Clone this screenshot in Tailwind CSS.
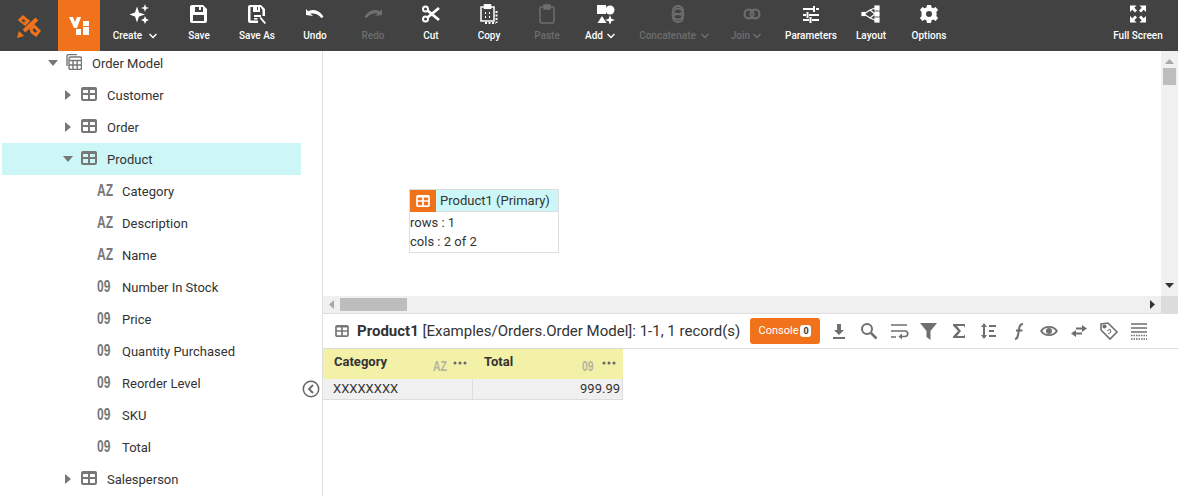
<!DOCTYPE html>
<html>
<head>
<meta charset="utf-8">
<script src="https://cdn.jsdelivr.net/npm/@tailwindcss/browser@4"></script>
</head>
<body class="w-[1178px] h-[496px] overflow-hidden bg-white font-['Roboto',sans-serif] text-[13px] text-[#333]">
<svg class="hidden"><defs>
<symbol id="tbl" viewBox="0 0 16 14"><path fill-rule="evenodd" d="M2 0h12a2 2 0 0 1 2 2v10a2 2 0 0 1-2 2H2a2 2 0 0 1-2-2V2a2 2 0 0 1 2-2zM2 3v3h5V3zm7 0v3h5V3zM2 8v4h5V8zm7 0v4h5V8z"/></symbol>
</defs></svg>

<header class="h-[51px] bg-[#424242] flex text-[10px] font-medium text-white">
  <div class="w-[58px] flex items-center justify-center">
    <svg class="w-6 h-6" viewBox="0 0 24 24" fill="none" stroke="#f0731c"><path stroke-width="3" d="M3 6l3-3 5 4-3 3zM14 15l3-3 5 5-3 4-4-3z"/><path stroke-width="4" d="M20 5L7 17"/><path fill="#f0731c" stroke="none" d="M0 24l2-7 5 5z"/><path stroke-width="1.500" stroke="#424242" d="M5 6l2 2M17 16l2 2"/></svg>
  </div>
  <div class="w-[42px] bg-[#f0731c] flex items-center justify-center">
    <svg class="w-5 h-5" viewBox="0 0 20 20" fill="#fff"><path d="M0 1h4l2 5 2-5h4L8 12H5z"/><rect x="7" y="13" width="5" height="6"/><rect x="14" y="5" width="6" height="5"/><rect x="14" y="11" width="6" height="8"/></svg>
  </div>

  <div class="w-[70px] flex flex-col items-center pt-1">
    <svg class="w-5 h-5 ml-[10px]" viewBox="0 0 20 20" fill="#fff"><path d="M7 2.500l2 6 6 2-6 2-2 6-2-6-6-2 6-2z"/><path d="M15 0l1 3 3 1-3 1-1 3-1-3-3-1 3-1z"/><path d="M15 12l1.200 2.800L19 16l-2.800 1.200L15 20l-1.200-2.800L11 16l2.800-1.200z"/></svg>
    <div class="mt-[5px] leading-[13px] flex items-center gap-[7px]"><span>Create</span><svg class="w-2 h-[6px]" viewBox="0 0 8 6" fill="none" stroke="#fff" stroke-width="1.500"><path d="M.5 1l3.500 3.500L7.500 1"/></svg></div>
  </div>
  <div class="w-[58px] flex flex-col items-center pt-1">
    <svg class="w-5 h-5" viewBox="0 0 20 20" fill="#fff"><path fill-rule="evenodd" d="M3 1h11l4 4v12a2 2 0 0 1-2 2H3a2 2 0 0 1-2-2V3a2 2 0 0 1 2-2zm3 2v5h8V3h-2v3h-2V3zM4 11v6h11v-6z"/></svg>
    <div class="mt-[5px] leading-[13px]">Save</div>
  </div>
  <div class="w-[58px] flex flex-col items-center pt-1">
    <svg class="w-5 h-5" viewBox="0 0 20 20" fill="#fff"><path fill-rule="evenodd" d="M3 1h11l4 4v7h-2.500V6l-2-3h-.5v5H6V3H3.500v13.500H11V19H3a2 2 0 0 1-2-2V3a2 2 0 0 1 2-2zm7 2v3h1V3z"/><path d="M7 11h7v2H7zM7 14h3.500v1.500H7z"/><path d="M14 13l5 6-1.500 1-5-6z"/></svg>
    <div class="mt-[5px] leading-[13px]">Save As</div>
  </div>
  <div class="w-[58px] flex flex-col items-center pt-1">
    <svg class="w-5 h-5" viewBox="0 -2 20 20" fill="#fff"><path d="M1 9l0-6 2.200 2.200C8 2.500 15 4 18.500 11l-2.300 1C14 8 9 7 5.200 7.500L8 10z"/></svg>
    <div class="mt-[5px] leading-[13px]">Undo</div>
  </div>
  <div class="w-[58px] flex flex-col items-center pt-1 text-[#6e6e6e]">
    <svg class="w-5 h-5" viewBox="0 -2 20 20" fill="#6e6e6e"><path d="M19 9l0-6-2.200 2.200C12 2.500 5 4 1.500 11l2.300 1C6 8 11 7 14.800 7.500L12 10z"/></svg>
    <div class="mt-[5px] leading-[13px]">Redo</div>
  </div>
  <div class="w-[58px] flex flex-col items-center pt-1">
    <svg class="w-5 h-5" viewBox="0 0 20 20" fill="none" stroke="#fff"><circle cx="4.500" cy="5" r="2.500" stroke-width="2"/><circle cx="4.500" cy="15" r="2.500" stroke-width="2"/><path stroke-width="2.800" d="M6.500 6.500L18 16M6.500 13.500L18 4"/></svg>
    <div class="mt-[5px] leading-[13px]">Cut</div>
  </div>
  <div class="w-[58px] flex flex-col items-center pt-1">
    <svg class="w-5 h-5" viewBox="0 0 20 20" fill="none" stroke="#fff" stroke-width="1.500"><path d="M5 3H2v14h13V3h-3"/><rect x="5.500" y=".8" width="6" height="3.500" fill="#fff"/><path stroke-width="2" stroke-dasharray="2 1.500" d="M6 9h1M10 9h1M6 13h1M10 13h1M17.500 7v12M6 19h11"/></svg>
    <div class="mt-[5px] leading-[13px]">Copy</div>
  </div>
  <div class="w-[58px] flex flex-col items-center pt-1 text-[#6e6e6e]">
    <svg class="w-5 h-5" viewBox="0 0 20 20" fill="none" stroke="#6e6e6e" stroke-width="1.500"><rect x="3" y="3" width="14" height="16" rx="1.500"/><rect x="7" y="1" width="6" height="4" fill="#6e6e6e"/></svg>
    <div class="mt-[5px] leading-[13px]">Paste</div>
  </div>
  <div class="w-[48px] flex flex-col items-center pt-1">
    <svg class="w-5 h-5 ml-[10px]" viewBox="0 0 20 20" fill="#fff"><rect x="2" y="1" width="9" height="9"/><circle cx="15" cy="6" r="4.500"/><path d="M7 12l4.500 7h-9z"/><path d="M15 11l1.300 3.700L20 16l-3.700 1.300L15 21l-1.300-3.700L10 16l3.700-1.300z"/></svg>
    <div class="mt-[5px] leading-[13px] flex items-center gap-1"><span>Add</span><svg class="w-2 h-[6px]" viewBox="0 0 8 6" fill="none" stroke="#fff" stroke-width="1.500"><path d="M.5 1l3.500 3.500L7.500 1"/></svg></div>
  </div>
  <div class="w-[100px] flex flex-col items-center pt-1 text-[#6e6e6e]">
    <svg class="w-5 h-5 ml-2" viewBox="0 0 20 20" fill="none" stroke="#6e6e6e" stroke-width="1.800"><circle cx="10" cy="10" r="5.500"/><ellipse cx="10" cy="6" rx="5" ry="4"/><ellipse cx="10" cy="14" rx="5" ry="4"/></svg>
    <div class="mt-[5px] leading-[13px] flex items-center gap-[5px]"><span>Concatenate</span><svg class="w-2 h-[6px]" viewBox="0 0 8 6" fill="none" stroke="#6e6e6e" stroke-width="1.500"><path d="M.5 1l3.500 3.500L7.500 1"/></svg></div>
  </div>
  <div class="w-[44px] flex flex-col items-center pt-1 text-[#6e6e6e]">
    <svg class="w-5 h-5 ml-3" viewBox="0 0 20 20" fill="none" stroke="#6e6e6e" stroke-width="2"><circle cx="7" cy="10" r="4.500"/><circle cx="13" cy="10" r="4.500"/></svg>
    <div class="mt-[5px] leading-[13px] flex items-center gap-[3px]"><span>Join</span><svg class="w-2 h-[6px]" viewBox="0 0 8 6" fill="none" stroke="#6e6e6e" stroke-width="1.500"><path d="M.5 1l3.500 3.500L7.500 1"/></svg></div>
  </div>
  <div class="w-[86px] flex flex-col items-center pt-1">
    <svg class="w-5 h-5" viewBox="0 0 20 20" fill="none" stroke="#fff" stroke-width="2"><path d="M2 5h10M15 5h3M2 11h3M8 11h10M2 16h6M11 16h7"/><path stroke-width="2" d="M13 2v6M6.500 8v6M9.500 13v6"/></svg>
    <div class="mt-[5px] leading-[13px]">Parameters</div>
  </div>
  <div class="w-[34px] flex flex-col items-center pt-1">
    <svg class="w-5 h-5" viewBox="0 0 20 20" fill="#fff" stroke="#fff" stroke-width="1.200"><path fill="none" d="M3 10L9 6l5-2M3 10l6 4 5 2M9 6l5 4M9 14l5-4"/><rect x="1" y="8.500" width="3" height="3"/><rect x="14" y="2" width="4" height="4"/><rect x="14" y="8" width="4" height="4"/><rect x="14" y="14" width="4" height="4"/></svg>
    <div class="mt-[5px] leading-[13px]">Layout</div>
  </div>
  <div class="w-[82px] flex flex-col items-center pt-1">
    <svg class="w-5 h-5" viewBox="0 0 20 20" fill="#fff"><path fill-rule="evenodd" d="M8 1h4l.6 2.600 1.700.7 2.300-1.400 2.500 3-1.800 2 .2 1.100.2 1-.2 1-.2 1 1.800 2-2.500 3-2.300-1.400-1.700.7L12 19H8l-.6-2.700-1.700-.7-2.300 1.400-2.500-3 1.800-2-.2-1-.1-2 .3-1.100-1.800-2 2.500-3 2.300 1.400 1.700-.7zM10 7a3 3 0 1 0 0 6 3 3 0 0 0 0-6z"/></svg>
    <div class="mt-[5px] leading-[13px]">Options</div>
  </div>
  <div class="ml-auto mr-[14px] w-[52px] flex flex-col items-center pt-1">
    <svg class="w-5 h-5" viewBox="0 0 20 20" fill="#fff"><path d="M2 1.500h6.500L6.300 3.700l2.700 2.700L7 8.400 4.300 5.700 2 8zM18 1.500h-6.500l2.200 2.200L11 6.400l2 2 2.700-2.700L18 8zM2 18.500h6.500l-2.200-2.200L9 13.600l-2-2-2.700 2.700L2 12zM18 18.500h-6.500l2.200-2.200-2.700-2.700 2-2 2.700 2.700L18 12z"/></svg>
    <div class="mt-[5px] leading-[13px] whitespace-nowrap">Full Screen</div>
  </div>
</header>

<div class="flex h-[445px]">
  <aside class="relative w-[323px] shrink-0 border-r border-[#e0e0e0]">
    <div class="h-full overflow-hidden">
      <ul class="-mt-1 ml-[2px] w-[299px]">
        <li class="h-8 flex items-center pl-[46px]">
          <span class="w-[18px]"><svg class="w-[10px] h-[6px]" viewBox="0 0 10 6" fill="#777"><path d="M0 0h10L5 6z"/></svg></span>
          <span class="w-[26px] -mt-[2px]"><svg class="w-4 h-4" viewBox="0 0 16 16" fill="none" stroke="#777" stroke-width="1.400"><path d="M1 12V2a1.500 1.500 0 0 1 1.500-1.500H11"/><rect x="3" y="3" width="12.500" height="12.500" rx="1.500"/><path d="M3 6.500h12.500M7 6.500v9M11.200 6.500v9M3 11h12.500"/></svg></span>
          <span class="pt-[2px]">Order Model</span>
        </li>
        <li class="h-8 flex items-center pl-[63px]">
          <span class="w-[16px]"><svg class="w-[6px] h-[10px]" viewBox="0 0 6 10" fill="#777"><path d="M0 0l6 5-6 5z"/></svg></span>
          <span class="w-[26px] -mt-[2px]"><svg class="w-4 h-[14px]" fill="#777"><use href="#tbl"/></svg></span>
          <span class="pt-[2px]">Customer</span>
        </li>
        <li class="h-8 flex items-center pl-[63px]">
          <span class="w-[16px]"><svg class="w-[6px] h-[10px]" viewBox="0 0 6 10" fill="#777"><path d="M0 0l6 5-6 5z"/></svg></span>
          <span class="w-[26px] -mt-[2px]"><svg class="w-4 h-[14px]" fill="#777"><use href="#tbl"/></svg></span>
          <span class="pt-[2px]">Order</span>
        </li>
        <li class="h-8 flex items-center pl-[61px] bg-[#ccf7f6]">
          <span class="w-[18px]"><svg class="w-[10px] h-[6px]" viewBox="0 0 10 6" fill="#777"><path d="M0 0h10L5 6z"/></svg></span>
          <span class="w-[26px] -mt-[2px]"><svg class="w-4 h-[14px]" fill="#777"><use href="#tbl"/></svg></span>
          <span class="pt-[2px]">Product</span>
        </li>
        <li class="h-8 flex items-center pl-[95px]"><span class="w-[25px]"><b class="block w-[15px] text-[16px] leading-none -mt-[1px] text-[#777] origin-left scale-x-75 font-['Liberation_Sans',sans-serif]">AZ</b></span><span class="pt-[2px]">Category</span></li>
        <li class="h-8 flex items-center pl-[95px]"><span class="w-[25px]"><b class="block w-[15px] text-[16px] leading-none -mt-[1px] text-[#777] origin-left scale-x-75 font-['Liberation_Sans',sans-serif]">AZ</b></span><span class="pt-[2px]">Description</span></li>
        <li class="h-8 flex items-center pl-[95px]"><span class="w-[25px]"><b class="block w-[15px] text-[16px] leading-none -mt-[1px] text-[#777] origin-left scale-x-75 font-['Liberation_Sans',sans-serif]">AZ</b></span><span class="pt-[2px]">Name</span></li>
        <li class="h-8 flex items-center pl-[95px]"><span class="w-[25px]"><b class="block w-[15px] text-[16px] leading-none -mt-[1px] text-[#777] origin-left scale-x-75 font-['Liberation_Sans',sans-serif]">09</b></span><span class="pt-[2px]">Number In Stock</span></li>
        <li class="h-8 flex items-center pl-[95px]"><span class="w-[25px]"><b class="block w-[15px] text-[16px] leading-none -mt-[1px] text-[#777] origin-left scale-x-75 font-['Liberation_Sans',sans-serif]">09</b></span><span class="pt-[2px]">Price</span></li>
        <li class="h-8 flex items-center pl-[95px]"><span class="w-[25px]"><b class="block w-[15px] text-[16px] leading-none -mt-[1px] text-[#777] origin-left scale-x-75 font-['Liberation_Sans',sans-serif]">09</b></span><span class="pt-[2px]">Quantity Purchased</span></li>
        <li class="h-8 flex items-center pl-[95px]"><span class="w-[25px]"><b class="block w-[15px] text-[16px] leading-none -mt-[1px] text-[#777] origin-left scale-x-75 font-['Liberation_Sans',sans-serif]">09</b></span><span class="pt-[2px]">Reorder Level</span></li>
        <li class="h-8 flex items-center pl-[95px]"><span class="w-[25px]"><b class="block w-[15px] text-[16px] leading-none -mt-[1px] text-[#777] origin-left scale-x-75 font-['Liberation_Sans',sans-serif]">09</b></span><span class="pt-[2px]">SKU</span></li>
        <li class="h-8 flex items-center pl-[95px]"><span class="w-[25px]"><b class="block w-[15px] text-[16px] leading-none -mt-[1px] text-[#777] origin-left scale-x-75 font-['Liberation_Sans',sans-serif]">09</b></span><span class="pt-[2px]">Total</span></li>
        <li class="h-8 flex items-center pl-[63px]">
          <span class="w-[16px]"><svg class="w-[6px] h-[10px]" viewBox="0 0 6 10" fill="#777"><path d="M0 0l6 5-6 5z"/></svg></span>
          <span class="w-[26px] -mt-[2px]"><svg class="w-4 h-[14px]" fill="#777"><use href="#tbl"/></svg></span>
          <span class="pt-[2px]">Salesperson</span>
        </li>
      </ul>
    </div>
    <svg class="absolute left-[302px] top-[329px] w-[18px] h-[18px]" viewBox="0 0 18 18" fill="#fff" stroke="#666"><circle cx="9" cy="9" r="7.700" stroke-width="1.500"/><path fill="none" stroke-width="1.800" d="M11 5L7 9l4 4"/></svg>
  </aside>

  <main class="flex-1 flex flex-col min-w-0">
    <section class="h-[245px] flex relative">
      <div class="flex-1 relative">
        <div class="absolute left-[86px] top-[138px] w-[150px] h-[64px] border border-[#ddd] bg-white">
          <div class="h-[22px] flex items-center bg-[#ccf7f6] border-b border-[#ddd]">
            <span class="w-[26px] h-[22px] bg-[#f0731c] flex items-center justify-center"><svg class="w-[14px] h-3" fill="#fff"><use href="#tbl"/></svg></span>
            <span class="ml-[4px] whitespace-nowrap">Product1 (Primary)</span>
          </div>
          <div class="leading-[19px] pt-[1px]">rows : 1</div>
          <div class="leading-[19px]">cols : 2 of 2</div>
        </div>
      </div>
      <div class="w-[17px] bg-[#f0f0f0] flex flex-col items-center">
        <svg class="w-[9px] h-[5px] mt-[8px]" viewBox="0 0 9 5" fill="#a8a8a8"><path d="M4.500 0L9 5H0z"/></svg>
        <div class="w-[13px] h-[17px] mt-[4px] bg-[#bdbdbd]"></div>
        <svg class="w-[9px] h-[5px] mt-auto mb-[8px]" viewBox="0 0 9 5" fill="#333"><path d="M0 0h9L4.500 5z"/></svg>
      </div>
    </section>
    <div class="h-[18px] flex bg-[#f0f0f0] border-b border-[#ddd]">
      <div class="flex-1 flex items-center relative">
        <svg class="ml-[6px] w-[5px] h-[9px]" viewBox="0 0 5 9" fill="#a8a8a8"><path d="M5 0v9L0 4.500z"/></svg>
        <div class="ml-[6px] w-[67px] h-[13px] bg-[#bdbdbd]"></div>
        <svg class="ml-auto mr-[6px] w-[5px] h-[9px]" viewBox="0 0 5 9" fill="#333"><path d="M0 0v9l5-4.500z"/></svg>
      </div>
      <div class="w-[17px] bg-[#dcdcdc]"></div>
    </div>
    <div class="h-[35px] flex items-center border-b border-[#ddd] pl-[12px] text-[15px]">
      <svg class="w-[14px] h-3 shrink-0" fill="#777"><use href="#tbl"/></svg>
      <span class="ml-2 whitespace-nowrap"><b>Product1</b> [Examples/Orders.Order Model]: 1-1, 1 record(s)</span>
      <button class="ml-auto h-[26px] w-[70px] bg-[#f0731c] rounded-[3px] text-white text-[11px] flex items-center justify-center gap-[2px]">Console <span class="bg-white text-[#333] font-bold rounded-[3px] text-[9px] leading-[12px] w-[11px] h-[12px] text-center">0</span></button>
      <div class="ml-[4px] mr-[24px] flex">
        <span class="w-[30px] h-5 flex items-center justify-center"><svg class="w-5 h-5" viewBox="0 0 20 20" fill="#6f6f6f"><path d="M8 3h4v6h3l-5 5-5-5h3zM4 16h12v2H4z"/></svg></span>
        <span class="w-[30px] h-5 flex items-center justify-center"><svg class="w-5 h-5" viewBox="0 0 20 20" fill="none" stroke="#6f6f6f" stroke-width="2"><circle cx="8" cy="8" r="5"/><path stroke-width="2.500" d="M12 12l5.500 5.500"/></svg></span>
        <span class="w-[30px] h-5 flex items-center justify-center"><svg class="w-5 h-5" viewBox="0 0 20 20" fill="none" stroke="#6f6f6f" stroke-width="1.700"><path d="M2 4h16M2 10h14a2.500 2.500 0 0 1 0 5.500h-4M2 16h5"/><path fill="#6f6f6f" stroke="none" d="M13 12.500v6l-3.500-3z"/></svg></span>
        <span class="w-[30px] h-5 flex items-center justify-center"><svg class="w-5 h-5" viewBox="0 0 20 20" fill="#6f6f6f"><path d="M1 2h17l-6.500 8v9l-4-3v-6z"/></svg></span>
        <span class="w-[30px] h-5 flex items-center justify-center"><svg class="w-5 h-5" viewBox="0 0 20 20" fill="#6f6f6f"><path d="M4 3h12v4l-1-2H8l4 5-4 5h7l1-2v4H4v-1.500L9 10 4 4.500z"/></svg></span>
        <span class="w-[30px] h-5 flex items-center justify-center"><svg class="w-5 h-5" viewBox="0 0 20 20" fill="#6f6f6f"><path d="M5 2l3 4H6v8h2l-3 4-3-4h2V6H2zM10 4h7v2h-7zM10 9h5v2h-5zM10 14h7v2h-7z"/></svg></span>
        <span class="w-[30px] h-5 flex items-center justify-center"><svg class="w-5 h-5" viewBox="0 0 20 20" fill="none" stroke="#6f6f6f" stroke-width="2"><path d="M6 18c2 0 2.500-1 3-4l1.500-8c.4-2 1.500-3 3.500-3M7 9.500h6.500"/></svg></span>
        <span class="w-[30px] h-5 flex items-center justify-center"><svg class="w-5 h-5" viewBox="0 0 20 20" fill="#6f6f6f"><path fill-rule="evenodd" d="M1 10c2-3.500 5-5 9-5s7 1.500 9 5c-2 3.500-5 5-9 5s-7-1.500-9-5zm2.300 0C5 12.300 7 13.300 10 13.300s5-1 6.700-3.300C15 7.700 13 6.700 10 6.700S5 7.700 3.300 10z"/><circle cx="10" cy="10" r="3"/></svg></span>
        <span class="w-[30px] h-5 flex items-center justify-center"><svg class="w-5 h-5" viewBox="0 0 20 20" fill="#6f6f6f"><path d="M13 4l5 3.500-5 3.500V8.500H7v-2h6zM7 9v2.500h6v2H7V16l-5-3.500z"/></svg></span>
        <span class="w-[30px] h-5 flex items-center justify-center"><svg class="w-5 h-5" viewBox="0 0 20 20" fill="none" stroke="#6f6f6f" stroke-width="1.600"><path d="M2 3l7-1 9 9-7 7-9-9z"/><circle cx="5.500" cy="5.500" r="1.300" fill="#6f6f6f"/><path stroke-width="1" d="M8 10l3-2 1 3-3 2"/></svg></span>
        <span class="w-[30px] h-5 flex items-center justify-center"><svg class="w-5 h-5" viewBox="0 0 20 20" fill="none" stroke="#6f6f6f" stroke-width="1.500"><path d="M2 3h16M2 7h16M2 11h16"/><path stroke-dasharray="1.500 1" d="M2 14.500h16M2 18h16"/></svg></span>
      </div>
    </div>
    <table class="w-[300px] table-fixed border-separate border-spacing-0">
      <thead>
        <tr class="h-[30px] bg-[#f3f0a8]">
          <th class="p-0 w-[150px] font-bold text-left">
            <div class="flex items-center pl-[11px] pr-[6px]">
              <span class="-mt-[5px]">Category</span>
              <b class="ml-auto w-[14px] text-[14px] leading-none mt-[3px] text-[#b5b5a0] origin-left scale-x-75 font-['Liberation_Sans',sans-serif]">AZ</b>
              <svg class="ml-[6px] w-[14px] h-[4px] -mt-[2px]" viewBox="0 0 14 4" fill="#666"><circle cx="2" cy="2" r="1.500"/><circle cx="7" cy="2" r="1.500"/><circle cx="12" cy="2" r="1.500"/></svg>
            </div>
          </th>
          <th class="p-0 w-[150px] font-bold text-left">
            <div class="flex items-center pl-[11px] pr-[7px]">
              <span class="-mt-[5px]">Total</span>
              <b class="ml-auto w-[14px] text-[14px] leading-none mt-[3px] text-[#b5b5a0] origin-left scale-x-75 font-['Liberation_Sans',sans-serif]">09</b>
              <svg class="ml-[6px] w-[14px] h-[4px] -mt-[2px]" viewBox="0 0 14 4" fill="#666"><circle cx="2" cy="2" r="1.500"/><circle cx="7" cy="2" r="1.500"/><circle cx="12" cy="2" r="1.500"/></svg>
            </div>
          </th>
        </tr>
      </thead>
      <tbody>
        <tr class="h-[21px] bg-[#f0f0f0]">
          <td class="p-0 pl-[10px] border-r border-b border-[#ddd]">XXXXXXXX</td>
          <td class="p-0 pr-[2px] text-right border-r border-b border-[#ddd]">999.99</td>
        </tr>
      </tbody>
    </table>
  </main>
</div>
</body>
</html>
